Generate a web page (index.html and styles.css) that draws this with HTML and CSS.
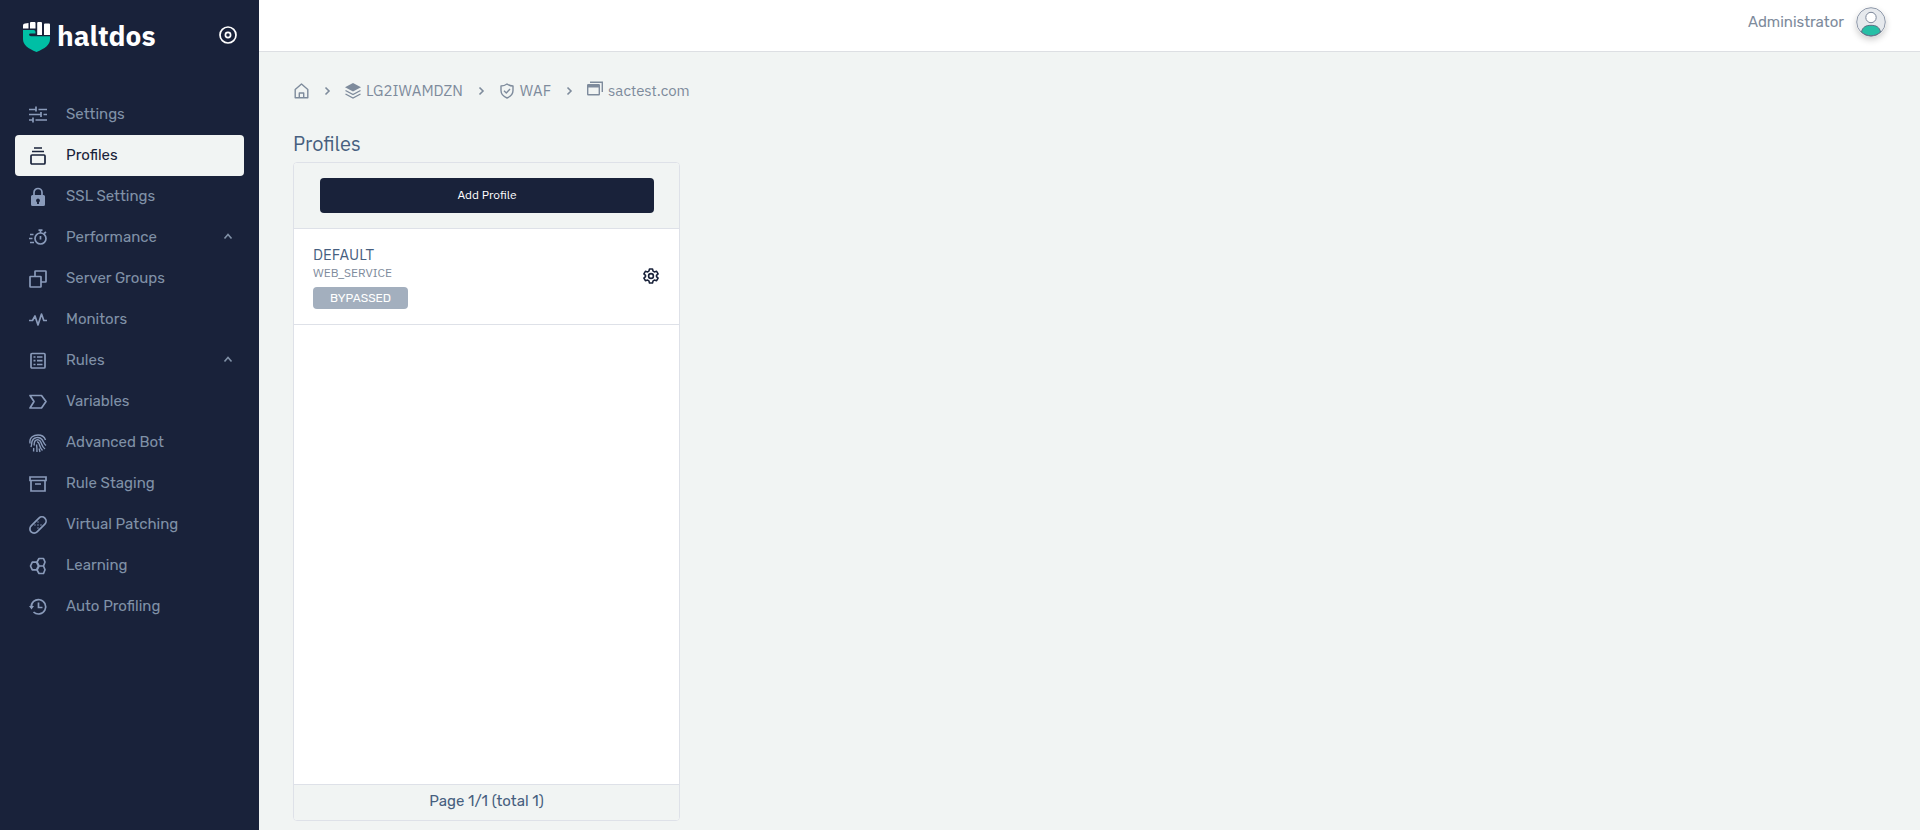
FILE: index.html
```html
<!DOCTYPE html>
<html lang="en">
<head>
<meta charset="utf-8">
<meta name="viewport" content="width=device-width, initial-scale=1">
<title>haltdos - Profiles</title>
<link rel="stylesheet" href="styles.css">
</head>
<body>
<div class="app">
  <aside class="sidebar">
    <div class="brand">
      <a class="brand-link" href="#">
        <svg class="brand-mark" viewBox="0 0 27 30" aria-hidden="true">
          <path fill="#00bfa5" d="M0 8h10.500q2 0 2 2v1.500H7.500q-1.500 0-1.500 1 0 1.800 2 1.800H27V17c0 6-5 9.500-13.500 13C5 26.500 0 23 0 17z"/>
          <path fill="#fff" d="M0 3.500Q0 1.500 2 1.500L5.500 1v5.500H0zM7 1q0-1 1-1h3.500q1 0 1 1v5.500H7zM14.200 1q0-1 1-1H18q1 0 1 1v12h-4.800zM21 2.500q0-1 1-1h4q1 0 1 1V13h-6z"/>
        </svg>
        <span class="brand-name">haltdos</span>
      </a>
      <button class="icon-button" type="button" aria-label="Pin sidebar">
        <svg class="icon" viewBox="0 0 18 18"><circle cx="9" cy="9" r="8"/><circle cx="9" cy="9" r="2.600"/></svg>
      </button>
    </div>
    <nav class="nav" aria-label="Main">
      <a class="nav-item" href="#">
        <svg class="icon" viewBox="0 0 18 18"><path d="M0 3.500h7M7 .5v5M9.500 3.500H18M0 8.500h12M12 6v5M14.500 8.500H18M0 14h4M4 11.500v5M6.500 14H18"/></svg>
        <span>Settings</span>
      </a>
      <a class="nav-item active" href="#" aria-current="page">
        <svg class="icon" viewBox="0 0 18 18"><path d="M5 1h8M3 4.500h12"/><rect x="2" y="8" width="14" height="9" rx="1"/></svg>
        <span>Profiles</span>
      </a>
      <a class="nav-item" href="#">
        <svg class="icon" viewBox="0 0 18 18"><path d="M5 8V4.500a4 4 0 0 1 8 0V8"/><path class="solid" fill-rule="evenodd" d="M3.500 7h11q1.500 0 1.500 1.500v8q0 1.500-1.500 1.500h-11Q2 18 2 16.500v-8Q2 7 3.500 7zM9 10.500a2 2 0 0 0-1 3.700V16h2v-1.800a2 2 0 0 0-1-3.700z"/></svg>
        <span>SSL Settings</span>
      </a>
      <a class="nav-item" href="#" aria-expanded="true">
        <svg class="icon" viewBox="0 0 18 18"><circle cx="11.500" cy="9.500" r="5.500"/><path d="M9.500 1.200h4M11.500 1v3M15 4.500l2-1.500M11.500 7v3.500M1 5.500h3.500M0 9.500h3.500M1 13.500h4"/></svg>
        <span>Performance</span>
        <svg class="caret" viewBox="0 0 8 8"><path d="M0.500 5.500L4 1.500l3.500 4"/></svg>
      </a>
      <a class="nav-item" href="#">
        <svg class="icon" viewBox="0 0 18 18"><path d="M6 6V1.500Q6 1 6.500 1h10q.5 0 .5.500v10q0 .5-.5.500H12"/><rect x="1" y="6.500" width="11" height="10.500" rx=".5"/></svg>
        <span>Server Groups</span>
      </a>
      <a class="nav-item" href="#">
        <svg class="icon" viewBox="0 0 18 18"><path stroke-linejoin="round" d="M0 9.500h3.500L6 5l3 9 3.500-11 2.300 6.500H18"/></svg>
        <span>Monitors</span>
      </a>
      <a class="nav-item" href="#" aria-expanded="true">
        <svg class="icon" viewBox="0 0 18 18"><rect x="2" y="1.500" width="14" height="14.500" rx="1"/><path d="M4.500 5h2M8 5h5.500M4.500 8.700h2M8 8.700h5.500M4.500 12.500h2M8 12.500h5.500"/></svg>
        <span>Rules</span>
        <svg class="caret" viewBox="0 0 8 8"><path d="M0.500 5.500L4 1.500l3.500 4"/></svg>
      </a>
      <a class="nav-item" href="#">
        <svg class="icon" viewBox="0 0 18 18"><path stroke-linejoin="round" d="M1 2.500h11.500L17 8.500 12.500 15H1l4-6.500z"/></svg>
        <span>Variables</span>
      </a>
      <a class="nav-item" href="#">
        <svg class="icon fine" viewBox="0 0 18 18"><path d="M1 9.500C0 3 5 1 9 1s6.500 2 7.500 5M2 13C3 10 2.500 9.500 3 7.500 4 3.500 10 2 13 5.500c1.500 2 1.500 4 4 6M4.500 17.500c.3-1.500 0-2 .3-3.500M5 11.500c.5-2 0-3 1-4.500 2-2.500 5-1 6 1.500 1 2.500 1.500 5 4 6.500M8 8c2-.5 2 1.500 2.500 3 .5 2 1.500 4 3 5.500M7.500 10.500c.5 2.500.5 5 .5 7.500M10 14.500c.7 1.500.5 2 1 3.500"/></svg>
        <span>Advanced Bot</span>
      </a>
      <a class="nav-item" href="#">
        <svg class="icon" viewBox="0 0 18 18"><path d="M1 2h16v3.500H1zM2 5.500V16h14V5.500M6 9h6"/></svg>
        <span>Rule Staging</span>
      </a>
      <a class="nav-item" href="#">
        <svg class="icon" viewBox="0 0 18 18"><rect x="-.7" y="4.800" width="19.400" height="8.400" rx="4.200" transform="rotate(-45 9 9)"/><path class="dots" stroke-linecap="round" d="M9 6v.1M12 9v.1M9 12v.1M6 9v.1M9 9v.1"/></svg>
        <span>Virtual Patching</span>
      </a>
      <a class="nav-item" href="#">
        <svg class="icon" viewBox="0 0 18 18"><path stroke-linejoin="round" d="M3.300 5.200h4.200L9.500 9l-2 3.800H3.300L1.500 9zM10 1.500h4.500L16 5l-1.500 4H10L8 5zM10 9h4.500l1.500 3.700-1.500 3.800H10L8 13z"/></svg>
        <span>Learning</span>
      </a>
      <a class="nav-item" href="#">
        <svg class="icon" viewBox="0 0 18 18"><path d="M2.300 9.500A7.200 7.200 0 1 1 4.500 14M9.500 4.500v5h4"/><path class="solid" d="M0 8h5l-2.500 3.500z"/></svg>
        <span>Auto Profiling</span>
      </a>
    </nav>
  </aside>

  <div class="page">
    <header class="topbar">
      <a class="user" href="#">
        <span>Administrator</span>
        <svg class="avatar" viewBox="0 0 30 30" aria-hidden="true">
          <circle cx="15" cy="15" r="14.300" fill="#e6e9ed" stroke="#8d97a8"/>
          <path d="M5.500 25C6.500 20 10 18.300 15 18.300S23.500 20 24.500 25C19 30 11 30 5.500 25z" fill="#26bfa6" stroke="#5f6f85"/>
          <circle cx="15" cy="10.500" r="5.200" fill="#fff" stroke="#7c879a"/>
        </svg>
      </a>
    </header>

    <main class="content">
      <nav class="breadcrumb" aria-label="Breadcrumb">
        <a class="crumb" href="#" aria-label="Home">
          <svg class="crumb-icon" viewBox="0 0 16 16"><path stroke-linejoin="round" d="M2.200 6.500L8.500 1l6.300 5.500v8.300H2.200zM6.300 14.500V10h4.400v4.500"/></svg>
        </a>
        <svg class="separator" viewBox="0 0 8 8"><path d="M2.500 .5L6 4 2.500 7.500"/></svg>
        <a class="crumb" href="#">
          <svg class="crumb-icon" viewBox="0 0 16 16"><path class="solid" d="M8 0l8 4.200-8 4.300-8-4.300z"/><path d="M.5 7.500L8 11.500l7.500-4M.5 11L8 15l7.500-4"/></svg>
          <span>LG2IWAMDZN</span>
        </a>
        <svg class="separator" viewBox="0 0 8 8"><path d="M2.500 .5L6 4 2.500 7.500"/></svg>
        <a class="crumb" href="#">
          <svg class="crumb-icon" viewBox="0 0 16 16"><path stroke-linejoin="round" d="M8 1c2 1.500 4 2 6 2v4.500c0 4-2.500 6-6 7.500-3.500-1.500-6-3.500-6-7.500V3c2 0 4-.5 6-2zM5 7.800l2.300 2.200L11 6"/></svg>
          <span>WAF</span>
        </a>
        <svg class="separator" viewBox="0 0 8 8"><path d="M2.500 .5L6 4 2.500 7.500"/></svg>
        <a class="crumb" href="#">
          <svg class="crumb-icon raised" viewBox="0 0 16 16"><path d="M3 1.200h12.300V11"/><rect x=".7" y="3.700" width="11.600" height="10" rx=".5"/><path class="solid" d="M1 3.500h11v3H1z"/></svg>
          <span>sactest.com</span>
        </a>
      </nav>

      <h1 class="title">Profiles</h1>
      <div class="columns">
        <section class="card" aria-label="Profiles">
          <div class="card-head">
            <button class="primary" type="button">Add Profile</button>
          </div>
          <div class="profile">
            <div class="profile-text">
              <span class="profile-name">DEFAULT</span>
              <span class="profile-type">WEB_SERVICE</span>
              <span class="badge">BYPASSED</span>
            </div>
            <button class="icon-button gear" type="button" aria-label="Profile settings">
              <svg class="gear-icon" viewBox="0 0 16 16"><path stroke-linejoin="round" d="M6.500 1h3l.6 2.100 1.300.8 2.200-.6 1.500 2.600L13.500 7.400v1.200l1.600 1.500-1.500 2.600-2.200-.6-1.300.8-.6 2.100h-3l-.6-2.100-1.300-.8-2.200.6L.9 10.100l1.600-1.500V7.400L.9 5.900l1.500-2.600 2.200.6 1.300-.8z"/><circle cx="8" cy="8" r="2.400"/></svg>
            </button>
          </div>
          <div class="card-foot">Page 1/1 (total 1)</div>
        </section>
      </div>
    </main>
  </div>
</div>
</body>
</html>
```
FILE: styles.css
```css
* {
  box-sizing: border-box;
}

body {
  margin: 0;
  background: #f1f4f3;
  color: #7e8b9c;
  font-family: Rubik, Roboto, sans-serif;
  font-size: 15px;
  line-height: 20px;
}

a {
  color: inherit;
  text-decoration: none;
}

button {
  font: inherit;
  border: 0;
  cursor: pointer;
}

svg {
  display: block;
  flex: none;
  overflow: visible;
  fill: none;
  stroke: currentColor;
}

.solid {
  fill: currentColor;
  stroke: none;
}

.app {
  display: flex;
  min-height: 100vh;
}

.sidebar {
  flex: none;
  width: 259px;
  padding: 0 15px;
  background: #19223a;
  color: #8091a7;
}

.brand {
  display: flex;
  align-items: center;
  justify-content: space-between;
  height: 70px;
  margin-bottom: 24px;
  padding: 0 7px 0 8px;
  color: #fff;
}

.brand-link {
  display: flex;
  align-items: center;
  gap: 7px;
  padding-top: 3px;
}

.brand-mark {
  width: 27px;
  height: 30px;
  stroke: none;
}

.brand-name {
  padding-bottom: 2px;
  font-family: "IBM Plex Sans", "Noto Sans", sans-serif;
  font-size: 28px;
  font-weight: 700;
  line-height: 30px;
}

.icon-button {
  display: flex;
  padding: 0;
  background: none;
  color: inherit;
}

.nav {
  display: flex;
  flex-direction: column;
}

.nav-item {
  display: flex;
  align-items: center;
  height: 41px;
  padding: 0 12px 2px 14px;
  gap: 19px;
  border-radius: 4px;
}

.nav-item.active {
  background: #f1f4f3;
  color: #19223a;
}

.icon {
  width: 18px;
  height: 18px;
  stroke-width: 1.7;
}

.nav-item .icon {
  margin-top: 3px;
  color: #8a9bba;
}

.nav-item.active .icon {
  color: inherit;
}

.icon.fine {
  stroke-width: 1.4;
}

.dots {
  stroke-width: 1.4;
}

.caret {
  width: 8px;
  height: 8px;
  margin-left: auto;
  stroke-width: 1.6;
}

.page {
  display: flex;
  flex: 1;
  flex-direction: column;
  min-width: 0;
}

.topbar {
  display: flex;
  justify-content: flex-end;
  height: 52px;
  padding: 7px 34px 0;
  border-bottom: 1px solid #dddfe3;
  background: #fff;
}

.user {
  display: flex;
  align-items: center;
  gap: 12px;
  height: 30px;
}

.avatar {
  width: 30px;
  height: 30px;
  border-radius: 50%;
  box-shadow: 0 3px 6px #00000030;
}

.content {
  display: flex;
  flex: 1;
  flex-direction: column;
  padding: 28px 34px 9px;
}

.breadcrumb {
  display: flex;
  align-items: center;
  gap: 14px;
  height: 22px;
  color: #7e8b9c;
  font-family: "IBM Plex Sans", Roboto, sans-serif;
}

.crumb {
  display: flex;
  align-items: center;
  gap: 5px;
}

.crumb-icon {
  width: 16px;
  height: 16px;
  stroke-width: 1.4;
}

.crumb-icon.raised {
  margin-bottom: 4px;
}

.separator {
  width: 8px;
  height: 8px;
  stroke-width: 1.6;
}

.title {
  margin: 30px 0 6px;
  color: #475f7f;
  font-family: "IBM Plex Sans", Roboto, sans-serif;
  font-size: 20px;
  font-weight: 400;
  line-height: 24px;
}

.columns {
  display: grid;
  flex: 1;
  grid-template-columns: repeat(4, 1fr);
  gap: 15px;
}

.card {
  display: flex;
  flex-direction: column;
  border: 1px solid #dee1e8;
  border-radius: 4px;
  background: #fff;
  overflow: hidden;
}

.card-head {
  padding: 15px 25px 15px 26px;
  border-bottom: 1px solid #dee1e8;
  background: #f1f4f3;
}

.primary {
  display: block;
  width: 100%;
  height: 35px;
  padding: 0 0 2px;
  border-radius: 4px;
  background: #19223a;
  color: #fff;
  font-family: "IBM Plex Sans", "Open Sans", sans-serif;
  font-size: 12px;
}

.profile {
  display: flex;
  align-items: center;
  justify-content: space-between;
  padding: 16px 20px 15px 19px;
  border-bottom: 1px solid #dee1e8;
}

.profile-text {
  display: flex;
  flex-direction: column;
  align-items: flex-start;
  font-family: "IBM Plex Sans", Roboto, sans-serif;
}

.profile-name {
  color: #475f7f;
}

.profile-type {
  font-size: 12px;
  line-height: 16px;
}

.badge {
  margin-top: 6px;
  padding: 0 17px;
  border-radius: 4px;
  background: #a3afbe;
  color: #fff;
  font-family: Rubik, "Open Sans", sans-serif;
  font-size: 12px;
  line-height: 22px;
}

.gear {
  padding-bottom: 2px;
  color: #19223a;
}

.gear-icon {
  width: 16px;
  height: 16px;
  stroke-width: 1.6;
}

.card-foot {
  margin-top: auto;
  padding: 6px 0 9px;
  border-top: 1px solid #dee1e8;
  background: #f1f4f3;
  color: #475f7f;
  text-align: center;
}
```
